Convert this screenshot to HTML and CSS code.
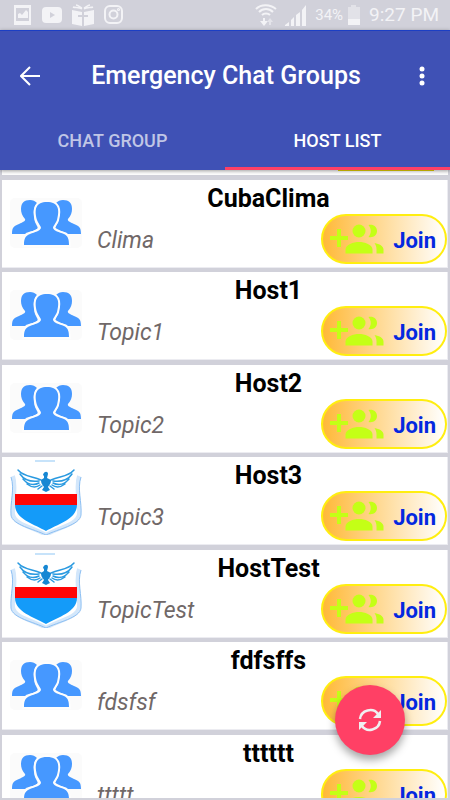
FILE: index.html
```html
<!DOCTYPE html>
<html lang="en">
<head>
  <meta charset="UTF-8" />
  <meta name="viewport" content="width=device-width, initial-scale=1.0"/>
  <title>Emergency Chat Groups</title>
  <link rel="stylesheet" href="styles.css">
</head>
<body>

  <!-- shared icons -->
  <svg class="sprite" aria-hidden="true">
    <symbol id="people" viewBox="0 0 72 50">
      <rect width="72" height="50" rx="5" fill="#fbfbfb"/>
      <g fill="#4698ff">
        <path d="M2 36c0-7 2-8 7-10 4-2 7-3 6-5-3-3-4-7-4-10 0-6 3-9 9-9 3 0 5 1 7 3-3 3-4 8-3 14 0 4 2 7 3 9 2 3-1 4-4 5-4 1-6 1-8 3z"/>
        <path d="M71 36c0-7-2-8-7-10-4-2-7-3-6-5 3-3 4-7 4-10 0-6-3-9-9-9-3 0-5 1-7 3 3 3 4 8 3 14 0 4-2 7-3 9-2 3 1 4 4 5 4 1 6 1 8 3z"/>
        <path d="M14 47c0-6 1-9 6-11 5-2 10-3 11-6 0-2-3-5-4-8-3-11-1-18 10-18s13 7 10 18c-1 3-4 6-4 8 1 3 6 4 11 6 4 2 5 5 5 11z" stroke="#fdfdfd" stroke-width="4" paint-order="stroke"/>
      </g>
    </symbol>
    <symbol id="shield" viewBox="0 0 72 78">
      <path d="M25 4h20" stroke="#8fc7f5" stroke-width="1"/>
      <path d="M3 19c4 12-1 25 0 38 1 11 23 14 33 21 10-7 32-10 33-21 1-13-4-26 0-38" fill="none" stroke="#d3e7fb" stroke-width="4"/>
      <path d="M1 20c4 12-1 25 0 38 1 10 23 14 35 20 12-6 34-10 35-20 1-13-4-26 0-38" fill="none" stroke="#8dbff2" stroke-width="1"/>
      <path d="M5 37h62v11H5z" fill="#ff0505"/>
      <path d="M5 48h62c0 14-19 19-31 26C24 67 5 62 5 48z" fill="#149bf9"/>
      <g fill="none" stroke="#2a9ae0" stroke-width="1.5" stroke-linecap="round">
        <path d="M31 23C22 19 14 20 8 13M29 24c-8 1-15-1-19-7M29 26c-6 3-12 1-16-4M30 28c-4 3-9 2-13-1"/>
        <path d="M41 23c9-4 17-3 23-10M43 24c8 1 15-1 19-7M43 26c6 3 12 1 16-4M42 28c4 3 9 2 13-1"/>
        <path d="M32 29l-4 3M40 29l4 3"/>
      </g>
      <path d="M33 18c1-4 5-4 5-1l-1 4 4 2c0 4-2 5-3 7l2 3-4 2-4-2 2-3c-1-2-3-3-3-7l3-2v-2z" fill="#1687d3"/>
    </symbol>
    <symbol id="group-add" viewBox="0 0 54 32">
      <g fill="#c4ff16">
        <path d="M0 12h7V5h4v7h7v4h-7v7H7v-7H0z"/>
        <circle cx="29" cy="7" r="6.5"/>
        <path d="M15.500 29.500v-4c0-5 8-7.500 13.500-7.500s13.500 2.500 13.500 7.500v4z"/>
        <path d="M38.500 1c5-1 8.500 2 8.500 6s-3.500 7-8.500 6c3-4 3-8 0-12zM44.500 19c5 1 9 3 9 6.500v4h-7v-4c0-3-1-5-2-6.500z"/>
      </g>
    </symbol>
  </svg>

  <div class="status-bar">
    <svg width="18" height="20" viewBox="0 0 18 20"><path fill="#f3f3f6" fill-rule="evenodd" d="M0 0h17v20H0zM2 3v13h13V3zM4 13V9l2-1 2 2 4-5 2 2v6z"/></svg>
    <svg width="20" height="16" viewBox="0 0 20 16"><rect width="20" height="16" rx="4" fill="#f3f3f6"/><path d="M8 5l5 3-5 3z" fill="#d1d1da"/></svg>
    <svg width="22" height="22" viewBox="0 0 22 22"><path fill="#f3f3f6" d="M0 6l10 2v14L0 20zM12 8l10-2v14l-10 2z"/><path d="M10 5C7 3 3 4 1 3M10 4C8 3 6 1 4 1M12 5c3-2 7-1 9-2M12 4c2-1 4-3 6-3" stroke="#f3f3f6" stroke-width="1.5" fill="none"/><path d="M6 11h10v2H6z" fill="#d1d1da"/></svg>
    <svg width="20" height="20" viewBox="0 0 20 20" fill="none" stroke="#f3f3f6" stroke-width="2"><rect x="1" y="1" width="17" height="17" rx="5"/><circle cx="9.5" cy="9.5" r="4"/><circle cx="14.500" cy="4.500" r=".6"/></svg>
    <div class="status-right">
      <svg width="22" height="22" viewBox="0 0 22 22" fill="none" stroke="#f3f3f6" stroke-width="2"><path d="M1 5c5-5 14-5 20 0M4 8c4-4 10-4 14 0M7 11c2-2 6-2 8 0"/><path d="M9 14v5"/><path d="M5 17h8l-4 5z" fill="#f3f3f6" stroke="none"/><path d="M15 21v-5" stroke="#e4e4ea"/><path d="M12 18h6l-3-4z" fill="#e4e4ea" stroke="none"/></svg>
      <svg width="22" height="21" viewBox="0 0 22 21" fill="#f3f3f6"><path d="M0 21v-1l4-3v4zM6 21v-6l3-3v9zM11 21V10l4-3v14zM17 21V5l4-5v21z"/></svg>
      <span class="battery-level">34%</span>
      <svg width="14" height="20" viewBox="0 0 14 20"><path fill="#e2e2e8" d="M1 2h3V0h5v2h4v12H1z"/><path fill="#f3f3f6" d="M1 14h12v6H1z"/></svg>
      <span class="clock">9:27 PM</span>
    </div>
  </div>

  <header class="app-bar">
    <div class="toolbar">
      <button class="icon-btn" aria-label="Back">
        <svg width="20" height="20" viewBox="0 0 20 20" fill="none" stroke="#fff" stroke-width="2"><path d="M20 10H2M10 1l-9 9 9 9"/></svg>
      </button>
      <h1>Emergency Chat Groups</h1>
      <button class="icon-btn" aria-label="More options">
        <svg width="6" height="20" viewBox="0 0 6 20" fill="#fff"><circle cx="3" cy="3" r="2.5"/><circle cx="3" cy="10" r="2.5"/><circle cx="3" cy="17" r="2.5"/></svg>
      </button>
    </div>
    <nav class="tabs">
      <button class="tab">CHAT GROUP</button>
      <button class="tab active">HOST LIST</button>
    </nav>
  </header>

  <main>
    <ul class="hosts">
      <li class="scrolled"><span></span></li>
      <li class="card">
        <svg class="avatar group"><use href="#people"/></svg>
        <h2>CubaClima</h2>
        <p>Clima</p>
        <button class="join"><svg><use href="#group-add"/></svg>Join</button>
      </li>
      <li class="card">
        <svg class="avatar group"><use href="#people"/></svg>
        <h2>Host1</h2>
        <p>Topic1</p>
        <button class="join"><svg><use href="#group-add"/></svg>Join</button>
      </li>
      <li class="card">
        <svg class="avatar group"><use href="#people"/></svg>
        <h2>Host2</h2>
        <p>Topic2</p>
        <button class="join"><svg><use href="#group-add"/></svg>Join</button>
      </li>
      <li class="card">
        <svg class="avatar"><use href="#shield"/></svg>
        <h2>Host3</h2>
        <p>Topic3</p>
        <button class="join"><svg><use href="#group-add"/></svg>Join</button>
      </li>
      <li class="card">
        <svg class="avatar"><use href="#shield"/></svg>
        <h2>HostTest</h2>
        <p>TopicTest</p>
        <button class="join"><svg><use href="#group-add"/></svg>Join</button>
      </li>
      <li class="card">
        <svg class="avatar group"><use href="#people"/></svg>
        <h2>fdfsffs</h2>
        <p>fdsfsf</p>
        <button class="join"><svg><use href="#group-add"/></svg>Join</button>
      </li>
      <li class="card">
        <svg class="avatar group"><use href="#people"/></svg>
        <h2>tttttt</h2>
        <p>ttttt</p>
        <button class="join"><svg><use href="#group-add"/></svg>Join</button>
      </li>
    </ul>
  </main>

  <button class="refresh" aria-label="Refresh">
    <svg width="24" height="24" viewBox="0 0 24 24">
      <g fill="none" stroke="#f0f0f0" stroke-width="2.5"><path d="M2 11C3 2 15-1 20 6M22 13c-1 9-13 12-18 5"/></g>
      <path fill="#f0f0f0" d="M23 2v8h-8zM1 22v-8h8z"/>
    </svg>
  </button>

</body>
</html>
```
FILE: styles.css
```css
:root {
  --bg: #d1d1da;
  --primary: #3f51b5;
  --accent: #ff4065;
  --status: #f3f3f6;
  --join: #0428e0;
}

* {
  box-sizing: border-box;
  font-family: Roboto, sans-serif;
}

body {
  margin: 0;
  height: 100vh;
  background: var(--bg);
  display: flex;
  flex-direction: column;
  overflow: hidden;
}

button {
  border: none;
  background: none;
  padding: 0;
  cursor: pointer;
}

.sprite {
  position: absolute;
  width: 0;
  height: 0;
}

/* status bar */
.status-bar {
  flex: none;
  height: 30px;
  padding: 0 11px 0 14px;
  display: flex;
  align-items: center;
  gap: 10px;
  color: var(--status);
}

.status-right {
  margin-left: auto;
  display: flex;
  align-items: center;
  gap: 8px;
}

.battery-level {
  font-size: 15px;
  margin-right: -4px;
}

.clock {
  font-size: 19px;
  line-height: 30px;
}

/* app bar */
.app-bar {
  flex: none;
  position: relative;
  z-index: 1;
  background: var(--primary);
  border-top: 1px solid #1c3fc4;
  box-shadow: 0 1px 4px rgba(0, 0, 0, 0.4);
}

.toolbar {
  height: 81px;
  padding: 8px 14px 0 16px;
  display: flex;
  align-items: center;
}

.toolbar h1 {
  flex: 1;
  margin: 0;
  color: #fff;
  font-size: 25px;
  font-weight: 500;
  text-align: center;
}

.icon-btn {
  width: 28px;
  height: 40px;
  display: flex;
  align-items: center;
  justify-content: center;
}

.tabs {
  display: flex;
}

.tab {
  flex: 1;
  height: 58px;
  color: #c0c6e6;
  font-size: 18px;
  font-weight: 500;
  border-top: 1px solid transparent;
  border-bottom: 3px solid transparent;
}

.tab.active {
  color: #fff;
  border-bottom-color: var(--accent);
}

/* host list */
main {
  flex: 1;
  min-height: 0;
  overflow: hidden;
  margin: 0 2px 2px;
}

.hosts {
  list-style: none;
  margin: 0;
  padding: 0;
}

.scrolled {
  height: 5px;
  margin-bottom: 5px;
  padding-right: 14px;
  background: #fff;
}

.scrolled span {
  display: block;
  width: 96px;
  height: 1px;
  margin-left: auto;
  background: #f0d800;
}

.card {
  height: 88px;
  margin-bottom: 4px;
  background: #fff;
  border: 1px solid #ececf1;
  border-width: 0 1px 1px 0;
  display: grid;
  grid-template-columns: 88px 1fr 126px;
  grid-template-rows: 34px 50px;
}

.card:nth-child(odd) {
  margin-bottom: 5px;
}

.avatar {
  grid-row: 1 / 3;
  width: 72px;
  height: 78px;
  margin-left: 8px;
}

.avatar.group {
  height: 50px;
  margin-top: 18px;
}

.card h2 {
  grid-column: 2 / 4;
  margin: 0;
  font-size: 25px;
  font-weight: 700;
  line-height: 38px;
  text-align: center;
}

.card p {
  margin: 0;
  padding-left: 7px;
  color: #706868;
  font-size: 23px;
  font-style: italic;
  line-height: 54px;
}

.join {
  height: 50px;
  display: flex;
  align-items: center;
  justify-content: space-between;
  padding: 2px 9px 0 7px;
  border: 2px solid #ffee10;
  border-radius: 25px;
  background: linear-gradient(90deg, #ffb938, #fff);
  color: var(--join);
  font-size: 22px;
  font-weight: 700;
}

.join svg {
  width: 54px;
  height: 32px;
}

/* floating button */
.refresh {
  position: absolute;
  right: 45px;
  bottom: 45px;
  z-index: 2;
  width: 70px;
  height: 70px;
  border-radius: 50%;
  background: var(--accent);
  box-shadow: 0 5px 8px rgba(0, 0, 0, 0.35);
  display: flex;
  align-items: center;
  justify-content: center;
}
```
